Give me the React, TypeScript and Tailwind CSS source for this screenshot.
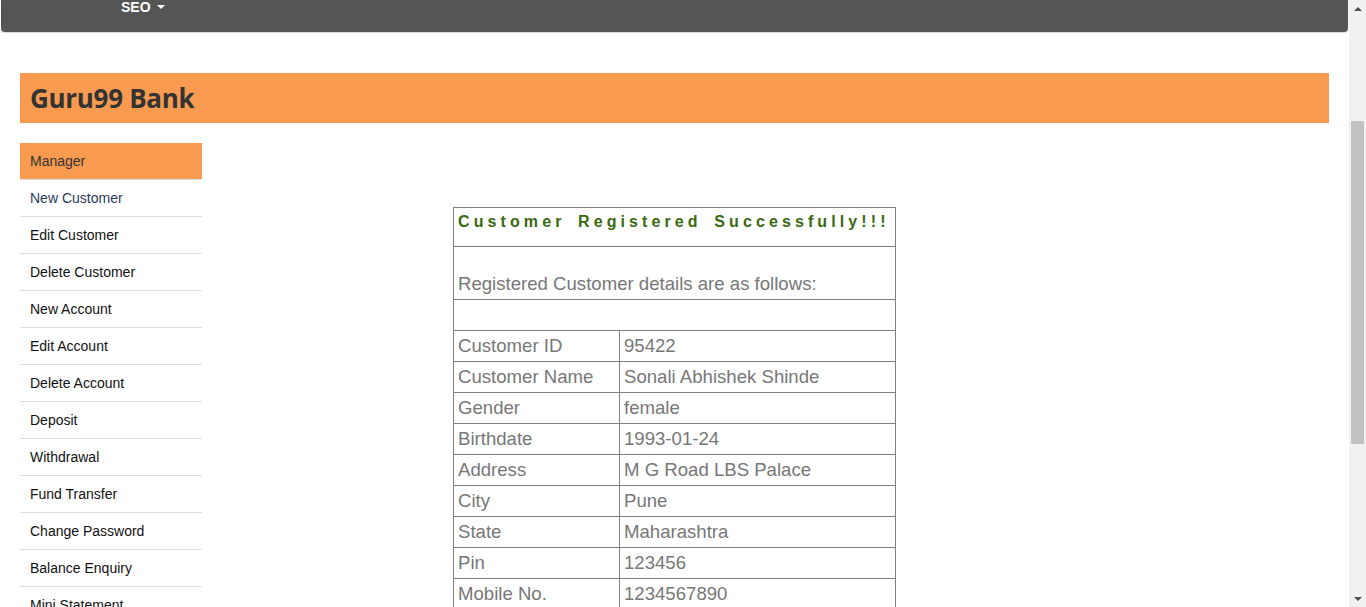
import React from "react";

const menu = [
  "Manager",
  "New Customer",
  "Edit Customer",
  "Delete Customer",
  "New Account",
  "Edit Account",
  "Delete Account",
  "Deposit",
  "Withdrawal",
  "Fund Transfer",
  "Change Password",
  "Balance Enquiry",
  "Mini Statement",
];

const details: [string, string][] = [
  ["Customer ID", "95422"],
  ["Customer Name", "Sonali Abhishek Shinde"],
  ["Gender", "female"],
  ["Birthdate", "1993-01-24"],
  ["Address", "M G Road LBS Palace"],
  ["City", "Pune"],
  ["State", "Maharashtra"],
  ["Pin", "123456"],
  ["Mobile No.", "1234567890"],
  ["Email", "sonali@test.com"],
];

function Scrollbar() {
  return (
    <div className="w-[17px] h-full bg-[#f1f1f1] flex flex-col items-center shrink-0">
      <div className="h-[17px] w-full flex items-center justify-center">
        <div className="w-0 h-0 border-l-[4px] border-r-[4px] border-b-[4px] border-l-transparent border-r-transparent border-b-[#505050]" />
      </div>
      <div className="mt-[104px] w-[13px] h-[323px] bg-[#c1c1c1]" />
      <div className="flex-1" />
      <div className="h-[17px] w-full flex items-center justify-center">
        <div className="w-0 h-0 border-l-[4px] border-r-[4px] border-t-[4px] border-l-transparent border-r-transparent border-t-[#505050]" />
      </div>
    </div>
  );
}

export default function App() {
  return (
    <div className="w-[1366px] h-[607px] overflow-hidden flex bg-white font-['Liberation_Sans',Arial,sans-serif]">
      <div className="w-[1349px] h-full overflow-hidden">
        {/* top nav, scrolled partly out of view */}
        <div className="mx-[1px] h-[32px] bg-[#555555] rounded-b-[4px] shadow-[0_1px_1px_rgba(0,0,0,0.15)] pl-[120px] flex items-start">
          <span className="flex items-center gap-[6px] text-white font-bold text-[14px] leading-[14px]">
            SEO
            <span className="w-0 h-0 border-l-[4px] border-r-[4px] border-t-[4px] border-l-transparent border-r-transparent border-t-white" />
          </span>
        </div>

        <div className="mx-[20px] mt-[41px] h-[50px] bg-[#f89b50] flex items-center px-[10px]">
          <h1 className="text-[26px] font-bold text-[#333333] font-['Open_Sans',sans-serif] tracking-[-0.3px]">
            Guru99 Bank
          </h1>
        </div>

        <div className="flex mx-[20px] mt-[20px]">
          <ul className="w-[182px] shrink-0 text-[14px]">
            {menu.map((m, i) => (
              <li
                key={m}
                className={
                  i === 0
                    ? "h-[37px] bg-[#f89b50] border-b border-[#dddddd] px-[10px] flex items-center text-[#333333]"
                    : i === 1
                    ? "h-[37px] border-b border-[#dddddd] px-[10px] flex items-center text-[#2a3a5a]"
                    : "h-[37px] border-b border-[#dddddd] px-[10px] flex items-center text-[#111111]"
                }
              >
                {m}
              </li>
            ))}
          </ul>

          <div className="ml-[251px] mt-[64px]">
            <table className="w-[443px] border-collapse border border-[#808080] text-[18.6px] text-[#777777]">
              <tbody>
                <tr className="h-[39px]">
                  <td colSpan={2} className="border border-[#808080] px-[4px] align-top pt-[2px]">
                    <p className="text-[16px] font-bold text-[#3a6a10] tracking-[4.1px] [word-spacing:4px] whitespace-nowrap">
                      Customer Registered Successfully!!!
                    </p>
                  </td>
                </tr>
                <tr className="h-[53px]">
                  <td colSpan={2} className="border border-[#808080] px-[4px] align-bottom pb-[1px]">
                    Registered Customer details are as follows:
                  </td>
                </tr>
                <tr className="h-[31px]">
                  <td colSpan={2} className="border border-[#808080]" />
                </tr>
                {details.map(([k, v]) => (
                  <tr key={k} className="h-[31px]">
                    <td className="w-[166px] border border-[#808080] px-[4px] leading-[30px]">{k}</td>
                    <td className="border border-[#808080] px-[4px] leading-[30px]">{v}</td>
                  </tr>
                ))}
              </tbody>
            </table>
          </div>
        </div>
      </div>
      <Scrollbar />
    </div>
  );
}
